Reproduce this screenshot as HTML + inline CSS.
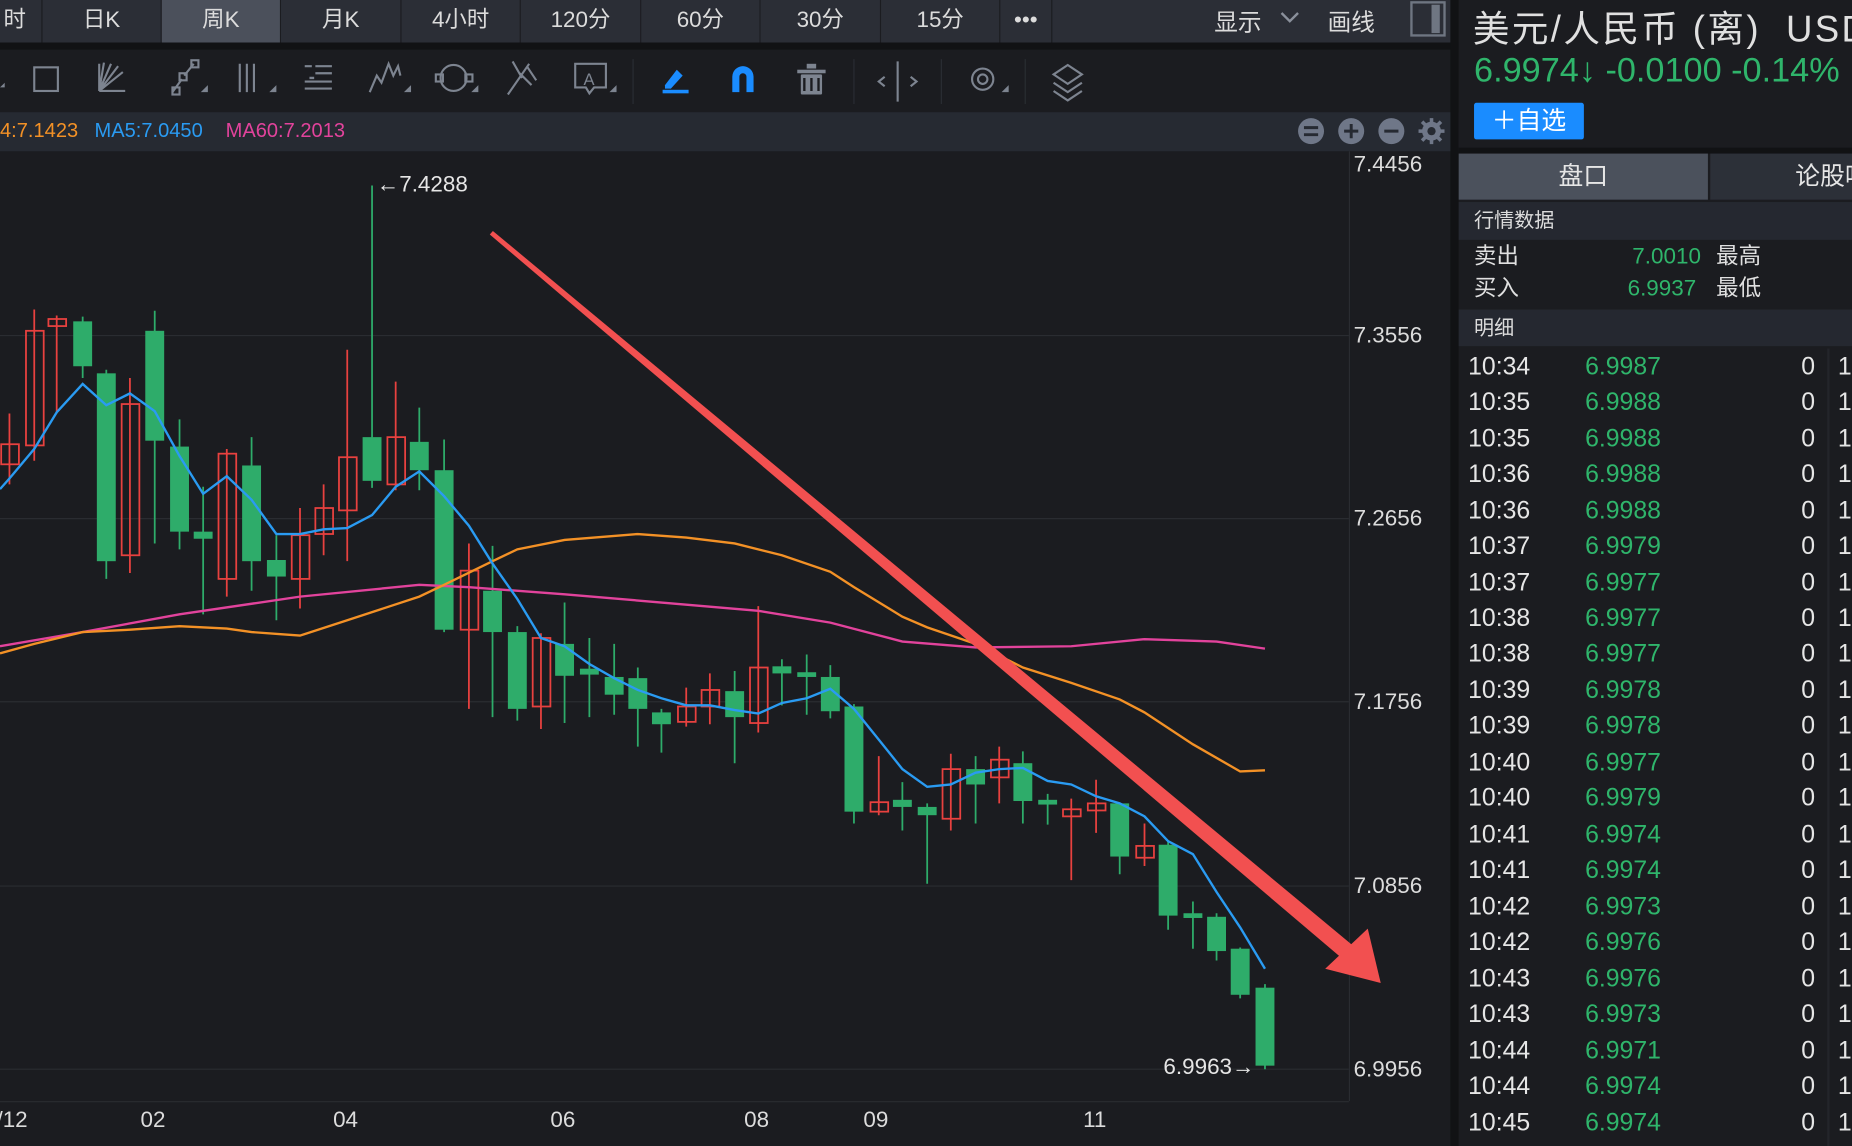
<!DOCTYPE html>
<html><head><meta charset="utf-8">
<style>
*{margin:0;padding:0;box-sizing:border-box}
html,body{width:1852px;height:1146px;overflow:hidden;background:#1b1c20}
#w{position:absolute;left:0;top:0;width:1568px;height:970px;transform:scale(1.18112,1.18144);transform-origin:0 0;font-family:"Liberation Sans","Noto Sans CJK SC",sans-serif;color:#e0e0e0;background:#1b1c20}
.a{position:absolute}
.tab{position:absolute;top:0;height:36px;line-height:36px;text-align:center;font-size:19px;color:#dcdcdc;border-right:1px solid #1b1c20;background:#2b2e36}
.ya{position:absolute;left:1146px;font-size:19px;color:#dcdcdc}
.xa{position:absolute;top:938px;font-size:19px;color:#dcdcdc}
.row{position:absolute;left:1235px;width:333px;height:30px;font-size:21px;line-height:30px}
.row .t{position:absolute;left:8px;color:#e6e6e6}
.row .p{position:absolute;left:107px;color:#2fb56b}
.row .z{position:absolute;left:290px;color:#e6e6e6}
.row .o{position:absolute;left:321px;color:#e6e6e6}
.kv{position:absolute;font-size:19px;line-height:24px;height:24px}
</style></head><body><div id="w">
<div class="a" style="left:0;top:0;width:1228px;height:36px;background:#2b2e36"></div>
<div class="tab" style="left:-10px;width:46px">时</div>
<div class="tab" style="left:36px;width:101px">日K</div>
<div class="tab" style="left:137px;width:101px;background:#4b505b">周K</div>
<div class="tab" style="left:238px;width:102px">月K</div>
<div class="tab" style="left:340px;width:101px">4小时</div>
<div class="tab" style="left:441px;width:102px">120分</div>
<div class="tab" style="left:543px;width:101px">60分</div>
<div class="tab" style="left:644px;width:102px">30分</div>
<div class="tab" style="left:746px;width:101px">15分</div>
<div class="tab" style="left:847px;width:44px">•••</div>
<div class="a" style="left:1028px;top:3px;font-size:20px;color:#dcdcdc">显示</div>
<svg class="a" style="left:1083px;top:8px" width="18" height="14"><path d="M2 3l7 7 7-7" stroke="#8a909b" stroke-width="2" fill="none"/></svg>
<div class="a" style="left:1124px;top:3px;font-size:20px;color:#dcdcdc">画线</div>
<div class="a" style="left:1194px;top:1px;width:30px;height:30px;border:2px solid #6f7682"></div>
<div class="a" style="left:1212px;top:4px;width:7px;height:24px;background:#6f7682"></div>
<div class="a" style="left:0;top:36px;width:1235px;height:6px;background:#111214"></div>
<svg class="a" style="left:0;top:42px" width="1228" height="53">
<g stroke="#7d8490" stroke-width="1.8" fill="none">
<rect x="29" y="15" width="20" height="20"/>
<path d="M84 35h22M84 35l20-16M84 35l16-21M84 35l10-23M84 35l4-24M84 35V12"/>
<path d="M146 36l8-11M156 22l8-10"/><rect x="152" y="20" width="6" height="6"/><rect x="162" y="9" width="6" height="6"/><rect x="146" y="32" width="6" height="6"/>
<path d="M203 12v24M209 12v24M215 12v24"/>
<path d="M258 14h6M267 14h14M267 20h14M258 27h23M258 33h23"/>
<path d="M313 36l6-14 4 6 6-16 4 10 4-8 2 8"/>
<circle cx="384" cy="24" r="11"/><rect x="369" y="21" width="6" height="6"/><rect x="394" y="21" width="6" height="6"/>
<path d="M430 38l18-26M434 10l8 14M440 20l10 10M446 14l8 12"/>
<path d="M487 12h26v20h-10l-4 5-3-5h-9z"/>
<path d="M760 10v34M749 23l-5 4 5 4M771 23l5 4-5 4"/>
<circle cx="832" cy="25" r="9"/><circle cx="832" cy="25" r="4"/>
<path d="M892 21l12-8 12 8-12 8zM892 28l12 8 12-8M892 35l12 8 12-8"/>
</g>
<text x="494" y="30" font-size="14" fill="#7d8490" font-family="Liberation Sans">A</text>
<path d="M262 24h4" stroke="#7d8490" stroke-width="2"/>
<g fill="#7d8490"><path d="M0 32l4-4v4z"/><path d="M170 36l6-6v6z"/><path d="M228 36l6-6v6z"/><path d="M342 36l6-6v6z"/><path d="M399 36l6-6v6z"/><path d="M516 36l6-6v6z"/><path d="M848 36l6-6v6z"/>
<rect x="675" y="17" width="24" height="3"/><rect x="683" y="12" width="8" height="4"/><rect x="678" y="21" width="18" height="17" rx="1"/></g>
<path d="M681 24v11M687 24v11M693 24v11" stroke="#1b1c20" stroke-width="2"/>
<path d="M563 30l10-13 5 5-10 11h-5z" fill="#1a8cff"/><rect x="561" y="34" width="22" height="3" fill="#1a8cff"/>
<path d="M620 36V23a9 9 0 0 1 18 0v13h-6V23a3 3 0 0 0-6 0v13z" fill="#1a8cff"/>
<g stroke="#2a2d33" stroke-width="1"><path d="M536 8v38M723 8v38M797 8v38M868 8v38"/></g>
</svg>
<div class="a" style="left:0;top:95px;width:1235px;height:33px;background:#262a32"></div>
<div class="a" style="left:0;top:101px;font-size:17px;color:#f39126">4:7.1423</div>
<div class="a" style="left:80px;top:101px;font-size:17px;color:#2a9bf2">MA5:7.0450</div>
<div class="a" style="left:191px;top:101px;font-size:17px;color:#e2439c">MA60:7.2013</div>
<svg class="a" style="left:1098px;top:99px" width="128" height="26">
<g fill="#6f7788"><circle cx="12" cy="12" r="11"/><circle cx="46" cy="12" r="11"/><circle cx="80" cy="12" r="11"/><circle cx="114" cy="12" r="8"/></g>
<g stroke="#262a32" stroke-width="2.5"><path d="M6 9h12M6 15h12M40 12h12M46 6v12M74 12h12"/></g>
<g stroke="#6f7788" stroke-width="3"><path d="M114 1v22M103 12h22M106 4l16 16M122 4l-16 16"/></g>
<circle cx="114" cy="12" r="3.5" fill="#262a32"/>
</svg>
<svg class="a" style="left:0;top:128px" width="1228" height="842">
<g stroke="#2a2c31" stroke-width="1"><path d="M0 156h1142M0 311h1142M0 466h1142M0 622h1142M0 777h1142"/><path d="M1142.5 0v804M0 804.5h1142"/></g>
</svg>
<svg class="a" style="left:0;top:0" width="1228" height="970">
<g stroke-width="1.5">
<g stroke="#e8413f" fill="none">
<path d="M8 350v60M29 262v128M48 267v83M110 320v165M192 380v125M254 430v85M274 410v60M294 296v179M335 323v92M397 460v140M458 536v81M581 582v33M601 570v43M642 513v107M744 640v50M805 638v65M846 632v48M907 676v69M928 660v45M969 697v36"/>
<rect x="1" y="376" width="15" height="17"/><rect x="22" y="280" width="15" height="97"/><rect x="41" y="270" width="15" height="6"/><rect x="103" y="342" width="15" height="128"/><rect x="185" y="384" width="15" height="106"/><rect x="247" y="453" width="15" height="37"/><rect x="267" y="430" width="15" height="22"/><rect x="287" y="387" width="15" height="45"/><rect x="328" y="370" width="15" height="40"/><rect x="390" y="483" width="15" height="50"/><rect x="451" y="540" width="15" height="58"/><rect x="574" y="598" width="15" height="13"/><rect x="594" y="584" width="15" height="14"/><rect x="635" y="565" width="15" height="47"/><rect x="737" y="679" width="15" height="8"/><rect x="798" y="651" width="15" height="42"/><rect x="839" y="643" width="15" height="15"/><rect x="900" y="685" width="15" height="6"/><rect x="921" y="680" width="15" height="6"/><rect x="962" y="716" width="15" height="10"/>
</g>
<g stroke="#2eac6a">
<path d="M70 268v52M90 313v177M131 263v197M152 355v110M172 412v108M213 370v130M234 453v72M315 157v256M355 345v70M376 372v163M417 462v145M438 530v80M478 510v102M499 540v67M520 545v60M540 565v67M560 600v37M622 568v78M662 558v39M683 554v51M703 563v45M723 596v101M764 662v41M785 680v68M826 640v57M866 636v61M887 672v26M948 680v60M989 712v75M1010 763v40M1030 773v40M1050 802v43M1071 833v72"/>
</g>
</g>
<g fill="#2eac6a">
<rect x="62" y="272" width="16" height="38"/><rect x="82" y="316" width="16" height="159"/><rect x="123" y="280" width="16" height="93"/><rect x="144" y="378" width="16" height="72"/><rect x="164" y="450" width="16" height="6"/><rect x="205" y="394" width="16" height="81"/><rect x="226" y="474" width="16" height="14"/><rect x="307" y="370" width="16" height="37"/><rect x="347" y="374" width="16" height="24"/><rect x="368" y="398" width="16" height="135"/><rect x="409" y="500" width="16" height="35"/><rect x="430" y="535" width="16" height="65"/><rect x="470" y="545" width="16" height="27"/><rect x="491" y="566" width="16" height="5"/><rect x="512" y="573" width="16" height="15"/><rect x="532" y="574" width="16" height="26"/><rect x="552" y="603" width="16" height="10"/><rect x="614" y="585" width="16" height="22"/><rect x="654" y="564" width="16" height="6"/><rect x="675" y="569" width="16" height="4"/><rect x="695" y="573" width="16" height="29"/><rect x="715" y="598" width="16" height="89"/><rect x="756" y="677" width="16" height="6"/><rect x="777" y="683" width="16" height="7"/><rect x="818" y="651" width="16" height="13"/><rect x="858" y="646" width="16" height="32"/><rect x="879" y="677" width="16" height="4"/><rect x="940" y="680" width="16" height="45"/><rect x="981" y="715" width="16" height="60"/><rect x="1002" y="773" width="16" height="4"/><rect x="1022" y="776" width="16" height="29"/><rect x="1042" y="803" width="16" height="39"/><rect x="1063" y="836" width="16" height="66"/>
</g>
<polyline fill="none" stroke="#e2439c" stroke-width="2" points="0,547 70,535 152,520 254,505 355,495 397,497 478,503 560,510 642,517 703,527 764,543 826,548 907,547 969,541 1030,543 1071,549"/>
<polyline fill="none" stroke="#f39126" stroke-width="2" points="0,553 29,545 70,535 110,533 152,530 192,532 213,535 254,538 294,525 355,505 376,495 417,475 438,465 478,457 540,452 581,455 622,460 662,470 703,484 723,497 764,522 785,531 826,545 866,565 907,578 948,592 969,603 1010,630 1050,653 1071,652"/>
<polyline fill="none" stroke="#2a9bf2" stroke-width="2" points="0,414 8,405 29,380 48,349 70,325 90,343 110,333 131,348 152,386 172,418 192,403 213,423 234,452 254,452 274,448 294,447 315,436 335,412 355,399 376,420 397,445 417,477 438,507 458,540 478,547 499,562 520,574 540,584 560,591 581,597 601,597 622,601 642,604 662,595 683,591 703,583 723,600 744,626 764,651 785,666 805,664 826,654 846,651 866,650 887,661 907,664 928,674 948,680 969,691 989,712 1010,723 1030,755 1050,785 1071,820"/>
<path d="M414.7 198.5 L417.3 195.5 L1145 800 L1136 811 Z" fill="#f25050"/>
<path d="M1169 832 L1122 820 L1158 786 Z" fill="#f25050"/>
</svg>
<div class="a" style="left:319px;top:146px;font-size:19px;color:#e6e6e6">←7.4288</div>
<div class="a" style="left:985px;top:893px;font-size:19px;color:#e6e6e6">6.9963→</div>
<div class="ya" style="top:129px">7.4456</div>
<div class="ya" style="top:274px">7.3556</div>
<div class="ya" style="top:429px">7.2656</div>
<div class="ya" style="top:584px">7.1756</div>
<div class="ya" style="top:740px">7.0856</div>
<div class="ya" style="top:895px">6.9956</div>
<div class="xa" style="left:-3px">/12</div>
<div class="xa" style="left:119px">02</div>
<div class="xa" style="left:282px">04</div>
<div class="xa" style="left:466px">06</div>
<div class="xa" style="left:630px">08</div>
<div class="xa" style="left:731px">09</div>
<div class="xa" style="left:917px">11</div>
<div class="a" style="left:1228px;top:0;width:7px;height:970px;background:#111214"></div>
<div class="a" style="left:1235px;top:0;width:333px;height:970px;background:#1b1c20;overflow:hidden">
<div class="a" style="left:12px;top:-1px;font-size:31px;color:#e0e0e0;white-space:nowrap;letter-spacing:2px">美元/人民币 (离)&nbsp;&nbsp;USD</div>
<div class="a" style="left:13px;top:44px;font-size:29px;color:#2fb56b;white-space:nowrap">6.9974↓ -0.0100 -0.14%</div>
</div>
<div class="a" style="left:1248px;top:87px;width:93px;height:31px;background:#1a8cff;border-radius:2px;color:#fff;font-size:21px;line-height:31px;text-align:center">＋自选</div>
<div class="a" style="left:1235px;top:125px;width:333px;height:5px;background:#111214"></div>
<div class="a" style="left:1235px;top:130px;width:211px;height:39px;background:#4b515c;text-align:center;line-height:39px;font-size:21px;color:#e6e6e6">盘口</div>
<div class="a" style="left:1448px;top:130px;width:120px;height:39px;background:#2c3038;line-height:39px;font-size:21px;color:#e6e6e6;padding-left:72px;white-space:nowrap;overflow:hidden">论股吧</div>
<div class="a" style="left:1235px;top:171px;width:333px;height:32px;background:#252830;line-height:32px;font-size:17px;color:#dcdcdc;padding-left:13px">行情数据</div>
<div class="kv" style="left:1248px;top:206px;color:#e0e0e0">卖出</div>
<div class="kv" style="left:1248px;top:233px;color:#e0e0e0">买入</div>
<div class="kv" style="left:1382px;top:206px;color:#2fb56b">7.0010</div>
<div class="kv" style="left:1378px;top:233px;color:#2fb56b">6.9937</div>
<div class="kv" style="left:1453px;top:206px;color:#e0e0e0">最高</div>
<div class="kv" style="left:1453px;top:233px;color:#e0e0e0">最低</div>
<div class="a" style="left:1235px;top:262px;width:333px;height:31px;background:#252830;line-height:31px;font-size:17px;color:#dcdcdc;padding-left:13px">明细</div>
<div class="a" style="left:1547px;top:295px;width:2px;height:675px;background:#23252a"></div>
<div class="row" style="top:296px"><span class="t">10:34</span><span class="p">6.9987</span><span class="z">0</span><span class="o">1</span></div>
<div class="row" style="top:326px"><span class="t">10:35</span><span class="p">6.9988</span><span class="z">0</span><span class="o">1</span></div>
<div class="row" style="top:357px"><span class="t">10:35</span><span class="p">6.9988</span><span class="z">0</span><span class="o">1</span></div>
<div class="row" style="top:387px"><span class="t">10:36</span><span class="p">6.9988</span><span class="z">0</span><span class="o">1</span></div>
<div class="row" style="top:418px"><span class="t">10:36</span><span class="p">6.9988</span><span class="z">0</span><span class="o">1</span></div>
<div class="row" style="top:448px"><span class="t">10:37</span><span class="p">6.9979</span><span class="z">0</span><span class="o">1</span></div>
<div class="row" style="top:479px"><span class="t">10:37</span><span class="p">6.9977</span><span class="z">0</span><span class="o">1</span></div>
<div class="row" style="top:509px"><span class="t">10:38</span><span class="p">6.9977</span><span class="z">0</span><span class="o">1</span></div>
<div class="row" style="top:539px"><span class="t">10:38</span><span class="p">6.9977</span><span class="z">0</span><span class="o">1</span></div>
<div class="row" style="top:570px"><span class="t">10:39</span><span class="p">6.9978</span><span class="z">0</span><span class="o">1</span></div>
<div class="row" style="top:600px"><span class="t">10:39</span><span class="p">6.9978</span><span class="z">0</span><span class="o">1</span></div>
<div class="row" style="top:631px"><span class="t">10:40</span><span class="p">6.9977</span><span class="z">0</span><span class="o">1</span></div>
<div class="row" style="top:661px"><span class="t">10:40</span><span class="p">6.9979</span><span class="z">0</span><span class="o">1</span></div>
<div class="row" style="top:692px"><span class="t">10:41</span><span class="p">6.9974</span><span class="z">0</span><span class="o">1</span></div>
<div class="row" style="top:722px"><span class="t">10:41</span><span class="p">6.9974</span><span class="z">0</span><span class="o">1</span></div>
<div class="row" style="top:753px"><span class="t">10:42</span><span class="p">6.9973</span><span class="z">0</span><span class="o">1</span></div>
<div class="row" style="top:783px"><span class="t">10:42</span><span class="p">6.9976</span><span class="z">0</span><span class="o">1</span></div>
<div class="row" style="top:814px"><span class="t">10:43</span><span class="p">6.9976</span><span class="z">0</span><span class="o">1</span></div>
<div class="row" style="top:844px"><span class="t">10:43</span><span class="p">6.9973</span><span class="z">0</span><span class="o">1</span></div>
<div class="row" style="top:875px"><span class="t">10:44</span><span class="p">6.9971</span><span class="z">0</span><span class="o">1</span></div>
<div class="row" style="top:905px"><span class="t">10:44</span><span class="p">6.9974</span><span class="z">0</span><span class="o">1</span></div>
<div class="row" style="top:936px"><span class="t">10:45</span><span class="p">6.9974</span><span class="z">0</span><span class="o">1</span></div>
</div></body></html>
